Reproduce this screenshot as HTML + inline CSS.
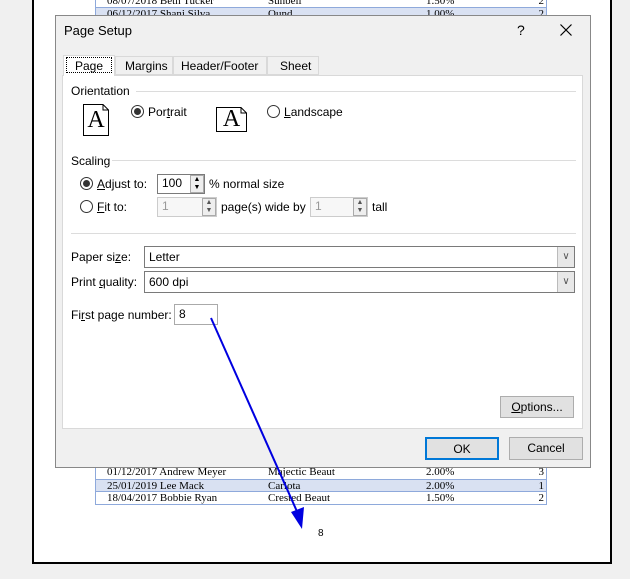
<!DOCTYPE html>
<html><head><style>
*{margin:0;padding:0;box-sizing:border-box}
body{width:630px;height:579px;background:#f0f0f0;position:relative;overflow:hidden;font-family:"Liberation Sans",sans-serif;font-size:12px;color:#000}
.a{position:absolute}
.page{left:32px;top:-2px;width:580px;height:566px;background:#fff;border:2px solid #000;border-top:none}
.row{position:absolute;left:95px;width:452px;height:13px;font-family:"Liberation Serif",serif;font-size:11px;line-height:12px;border-left:1px solid #8ea9db;border-right:1px solid #8ea9db}
.row span{position:absolute;top:0}
.hl{background:#d9e1f2}
.dlg{left:55px;top:15px;width:536px;height:453px;background:#f0f0f0;border:1px solid #888}
.panel{left:62px;top:75px;width:521px;height:354px;background:#fff;border:1px solid #d9d9d9}
.lbl{position:absolute;white-space:nowrap}
.line{position:absolute;height:1px;background:#dcdcdc}
.rad{position:absolute;width:13px;height:13px;border:1px solid #333;border-radius:50%;background:#fff}
.rad.on::after{content:"";position:absolute;left:2px;top:2px;width:7px;height:7px;border-radius:50%;background:#333}
.box{position:absolute;border:1px solid #7a7a7a;background:#fff;padding-left:4px;line-height:17px}
.dis{border-color:#ccc;color:#999;background:#f7f7f7}
.spin{position:absolute;width:14px;border:1px solid #aaa;background:#eee}
.btn{position:absolute;background:#e1e1e1;border:1px solid #adadad;text-align:center;line-height:20px}
.ico{position:absolute;font-family:"Liberation Serif",serif;font-size:24px;text-align:center}
u{text-decoration:underline}
</style></head><body>
<div class="a page"></div>
<div class="row" style="top:-5px;border-bottom:1px solid #8ea9db"><span style="left:11px">08/07/2018 Beth Tucker</span><span style="left:172px">Sunbell</span><span style="left:330px">1.50%</span><span style="right:2px">2</span></div>
<div class="row hl" style="top:8px"><span style="left:11px">06/12/2017 Shani Silva</span><span style="left:172px">Ound</span><span style="left:330px">1.00%</span><span style="right:2px">2</span></div>
<div class="row" style="top:466px"><span style="left:11px">01/12/2017 Andrew Meyer</span><span style="left:172px">Majectic Beaut</span><span style="left:330px">2.00%</span><span style="right:2px">3</span></div>
<div class="row hl" style="top:479px;border-top:1px solid #8ea9db;border-bottom:1px solid #8ea9db"><span style="left:11px">25/01/2019 Lee Mack</span><span style="left:172px">Carlota</span><span style="left:330px">2.00%</span><span style="right:2px">1</span></div>
<div class="row" style="top:492px;border-bottom:1px solid #8ea9db"><span style="left:11px">18/04/2017 Bobbie Ryan</span><span style="left:172px">Crested Beaut</span><span style="left:330px">1.50%</span><span style="right:2px">2</span></div>
<div class="lbl" style="left:318px;top:528px;font-size:10px">8</div>

<div class="a dlg"></div>
<div class="lbl" style="left:64px;top:23px;font-size:13px">Page Setup</div>
<div class="lbl" style="left:517px;top:22px;font-size:14px">?</div>
<svg class="a" style="left:560px;top:24px" width="12" height="12"><path d="M0.5 0.5L11.5 11.5M11.5 0.5L0.5 11.5" stroke="#000" stroke-width="1.2"/></svg>
<div class="a panel"></div>
<div class="a" style="left:63px;top:55px;width:52px;height:21px;background:#fff;border:1px solid #d9d9d9;border-bottom:none"></div>
<div class="a" style="left:66px;top:57px;width:46px;height:16px;border:1px dotted #000"></div>
<div class="lbl" style="left:75px;top:59px">Page</div>
<div class="a" style="left:115px;top:56px;width:58px;height:19px;background:#f0f0f0;border:1px solid #d9d9d9"></div>
<div class="lbl" style="left:125px;top:59px">Margins</div>
<div class="a" style="left:173px;top:56px;width:94px;height:19px;background:#f0f0f0;border:1px solid #d9d9d9"></div>
<div class="lbl" style="left:181px;top:59px">Header/Footer</div>
<div class="a" style="left:267px;top:56px;width:52px;height:19px;background:#f0f0f0;border:1px solid #d9d9d9"></div>
<div class="lbl" style="left:280px;top:59px">Sheet</div>

<div class="lbl" style="left:71px;top:84px">Orientation</div>
<div class="line" style="left:136px;top:91px;width:440px"></div>
<svg class="a" style="left:83px;top:104px" width="26" height="32"><path d="M0.5 0.5H20L25.5 6V31.5H0.5Z M20 0.5V6H25.5" fill="#fff" stroke="#000"/></svg>
<div class="ico" style="left:83px;top:104px;width:26px;line-height:32px">A</div>
<div class="rad on" style="left:131px;top:105px"></div>
<div class="lbl" style="left:148px;top:105px">Por<u>t</u>rait</div>
<svg class="a" style="left:216px;top:107px" width="31" height="25"><path d="M0.5 0.5H25L30.5 6V24.5H0.5Z M25 0.5V6H30.5" fill="#fff" stroke="#000"/></svg>
<div class="ico" style="left:216px;top:107px;width:31px;line-height:25px">A</div>
<div class="rad" style="left:267px;top:105px"></div>
<div class="lbl" style="left:284px;top:105px"><u>L</u>andscape</div>

<div class="lbl" style="left:71px;top:154px">Scaling</div>
<div class="line" style="left:112px;top:160px;width:464px"></div>
<div class="rad on" style="left:80px;top:177px"></div>
<div class="lbl" style="left:97px;top:177px"><u>A</u>djust to:</div>
<div class="box" style="left:157px;top:174px;width:48px;height:20px">100</div>
<div class="spin" style="left:190px;top:175px;height:18px;font-size:7px;line-height:8px;text-align:center">▲<br>▼</div>
<div class="lbl" style="left:209px;top:177px">% normal size</div>
<div class="rad" style="left:80px;top:200px"></div>
<div class="lbl" style="left:97px;top:200px"><u>F</u>it to:</div>
<div class="box dis" style="left:157px;top:197px;width:60px;height:20px">1</div>
<div class="spin" style="left:202px;top:198px;height:18px;font-size:7px;line-height:8px;text-align:center;color:#555">▲<br>▼</div>
<div class="lbl" style="left:221px;top:200px">page(s) wide by</div>
<div class="box dis" style="left:310px;top:197px;width:58px;height:20px">1</div>
<div class="spin" style="left:353px;top:198px;height:18px;font-size:7px;line-height:8px;text-align:center;color:#555">▲<br>▼</div>
<div class="lbl" style="left:372px;top:200px">tall</div>
<div class="line" style="left:71px;top:233px;width:505px"></div>

<div class="lbl" style="left:71px;top:250px">Paper si<u>z</u>e:</div>
<div class="box" style="left:144px;top:246px;width:431px;height:22px;line-height:20px">Letter</div>
<div class="a" style="left:557px;top:247px;width:17px;height:20px;background:#e8e8e8;border-left:1px solid #bbb;text-align:center;font-size:10px;line-height:20px;color:#555">∨</div>
<div class="lbl" style="left:71px;top:275px">Print <u>q</u>uality:</div>
<div class="box" style="left:144px;top:271px;width:431px;height:22px;line-height:20px">600 dpi</div>
<div class="a" style="left:557px;top:272px;width:17px;height:20px;background:#e8e8e8;border-left:1px solid #bbb;text-align:center;font-size:10px;line-height:20px;color:#555">∨</div>
<div class="lbl" style="left:71px;top:308px">Fi<u>r</u>st page number:</div>
<div class="box" style="left:174px;top:304px;width:44px;height:21px;border-color:#aaa;line-height:19px">8</div>

<div class="btn" style="left:500px;top:396px;width:74px;height:22px"><u>O</u>ptions...</div>
<div class="btn" style="left:425px;top:437px;width:74px;height:23px;border:2px solid #0078d7">OK</div>
<div class="btn" style="left:509px;top:437px;width:74px;height:23px">Cancel</div>

<svg class="a" style="left:0;top:0" width="630" height="579">
<line x1="211" y1="318" x2="299" y2="516" stroke="#0000e0" stroke-width="2"/>
<polygon points="302,529 291,512 304,507" fill="#0000e0"/>
</svg>
</body></html>
